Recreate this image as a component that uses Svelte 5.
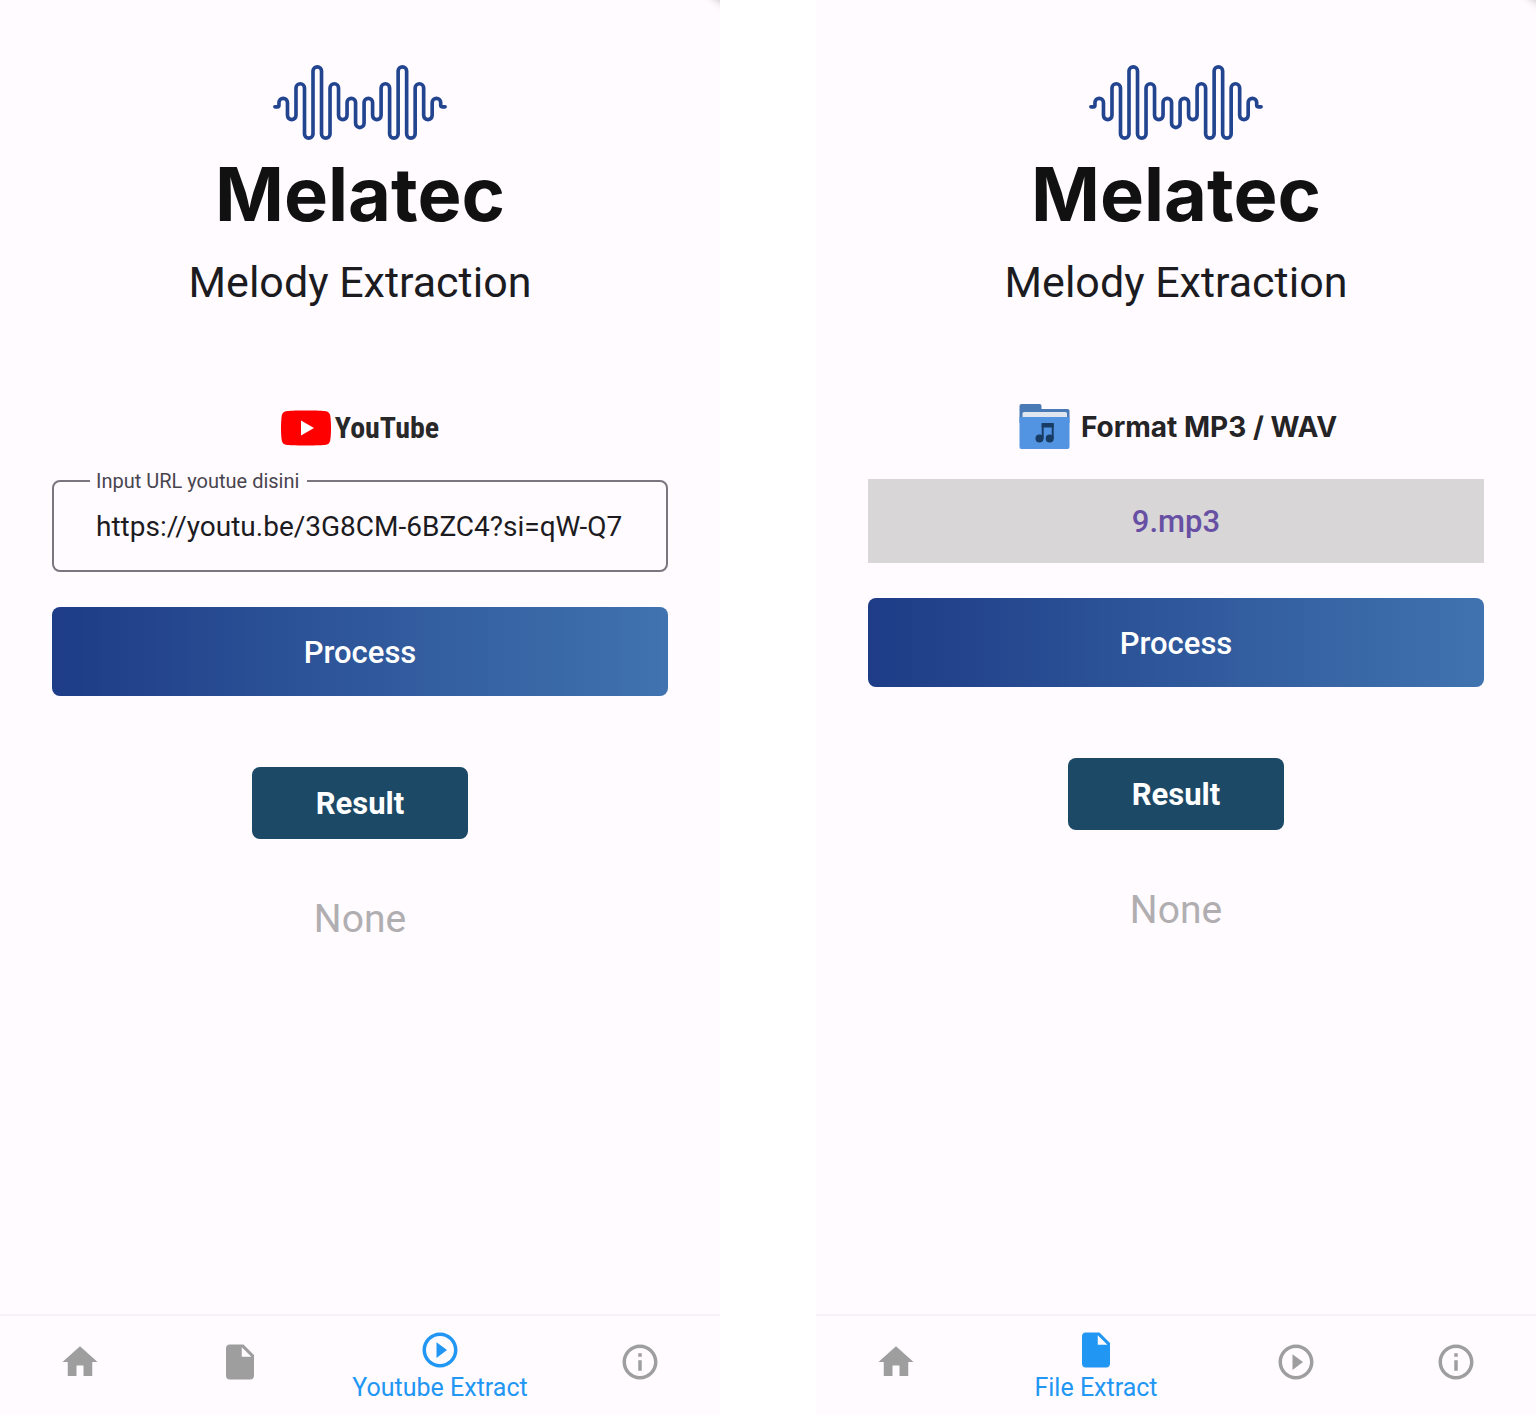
<script>
  const tops = [143.5, 99.5, 48.5, 99.5, 143.5, 143.5, 99.5, 48.5, 99.5, 143.5];
  const bottoms = [207.5, 263.5, 263.5, 207.5, 231.5, 207.5, 263.5, 263.5, 207.5];
  const half = 25.65;
  const r = half / 2;

  // Continuous line of rounded crests and troughs.
  function wave() {
    let x = 296.3;
    let d = `M284 169H${x - 4}Q${x} 169 ${x} 164`;
    tops.forEach((top, i) => {
      d += `V${top + r}a${r} ${r} 0 0 1 ${half} 0`;
      x += half;
      if (i < bottoms.length) {
        d += `V${bottoms[i] - r}a${r} ${r} 0 0 0 ${half} 0`;
        x += half;
      }
    });
    return d + `V164Q${x} 169 ${x + 4} 169H797`;
  }

  const wavePath = wave();

  const icons = {
    home: 'M10 20v-6h4v6h5v-8h3L12 3 2 12h3v8z',
    file: 'M6 2C4.900 2 4 2.900 4 4v16c0 1.100.9 2 2 2h12c1.100 0 2-.9 2-2V8l-6-6H6zm7 7V3.500L18.500 9H13z',
    play: 'M10 16.500l6-4.500-6-4.500v9zM12 2C6.480 2 2 6.480 2 12s4.480 10 10 10 10-4.480 10-10S17.520 2 12 2zm0 18c-4.410 0-8-3.590-8-8s3.590-8 8-8 8 3.590 8 8-3.590 8-8 8z',
    info: 'M11 7h2v2h-2zm0 4h2v6h-2zm1-9C6.480 2 2 6.480 2 12s4.480 10 10 10 10-4.480 10-10S17.520 2 12 2zm0 18c-4.410 0-8-3.590-8-8s3.590-8 8-8 8 3.590 8 8-3.590 8-8 8z'
  };

  const labels = { home: 'Home', file: 'File Extract', play: 'Youtube Extract', info: 'Info' };
  const items = ['home', 'file', 'play', 'info'];

  let url = $state('https://youtu.be/3G8CM-6BZC4?si=qW-Q7');
</script>

{#snippet header()}
  <header>
    <svg class="wave" viewBox="279 43 523 226" aria-hidden="true">
      <path d={wavePath} fill="none" stroke="#234590" stroke-width="11" stroke-linecap="round" />
    </svg>
    <h1>Melatec</h1>
    <p class="subtitle">Melody Extraction</p>
  </header>
{/snippet}

{#snippet actions()}
  <button class="process" type="button">Process</button>
  <button class="result" type="button">Result</button>
  <p class="none">None</p>
{/snippet}

{#snippet nav(active)}
  <nav>
    {#each items as item}
      <a href="#{item}" class:active={item === active} aria-label={labels[item]}>
        <svg viewBox="0 0 24 24" aria-hidden="true"><path d={icons[item]} /></svg>
        {#if item === active}<span>{labels[item]}</span>{/if}
      </a>
    {/each}
  </nav>
{/snippet}

<main>
  <section class="screen">
    {@render header()}
    <div class="content">
      <div class="brand youtube">
        <svg class="tube" viewBox="0 0 50 36" aria-hidden="true">
          <path d="M25 .5C36 .5 42 .7 45 1.200 47.500 1.700 48.800 3.200 49.200 5.500c.6 3.500.8 8 .8 12.500s-.2 9-.8 12.500c-.4 2.300-1.700 3.800-4.200 4.300-3 .5-9 .7-20 .7s-17-.2-20-.7C2.500 34.300 1.200 32.800.8 30.500.2 27 0 22.500 0 18S.2 9 .8 5.500C1.200 3.200 2.500 1.700 5 1.200 8 .7 14 .5 25 .5z" fill="#f00" />
          <path d="M20 10.500v15L33 18z" fill="#fff" />
        </svg>
        <span>YouTube</span>
      </div>
      <fieldset>
        <legend><label for="url">Input URL youtue disini</label></legend>
        <input id="url" type="text" bind:value={url} />
      </fieldset>
      {@render actions()}
    </div>
    {@render nav('play')}
  </section>

  <section class="screen">
    {@render header()}
    <div class="content">
      <div class="brand">
        <svg class="folder" viewBox="0 0 50 46" aria-hidden="true">
          <path d="M0 2Q0 0 2 0h18q2 0 2 2v3h26q2 0 2 2v12H0z" fill="#4a7ab5" />
          <rect x="3" y="8" width="44.500" height="8" rx="1.500" fill="#dfe6f0" />
          <path d="M0 13h50v30q0 2-2 2H2q-2 0-2-2z" fill="#5294e2" />
          <path d="M23.200 34.500V20H33.200V34.500" fill="none" stroke="#183c63" stroke-width="2" />
          <path d="M22.200 19.500h12v4h-12z" fill="#183c63" />
          <circle cx="20" cy="34.500" r="4" fill="#183c63" />
          <circle cx="30.200" cy="34.500" r="4" fill="#183c63" />
        </svg>
        <span>Format MP3 / WAV</span>
      </div>
      <button class="picked" type="button">9.mp3</button>
      {@render actions()}
    </div>
    {@render nav('file')}
  </section>
</main>

<style>
  :global(body) {
    margin: 0;
    background: #fff;
  }

  main {
    display: grid;
    grid-template-columns: 1fr 1fr;
    column-gap: 96px;
    min-height: 100vh;
    font-family: Roboto, sans-serif;
    color: #1c1b1f;
  }

  .screen {
    position: relative;
    display: flex;
    flex-direction: column;
    min-width: 0;
    overflow: hidden;
    background: #fffbff;
  }

  /* Edge of the ribbon's shadow in the corner */
  .screen::before {
    content: '';
    position: absolute;
    top: -24px;
    right: -22px;
    width: 40px;
    height: 24px;
    background: #8c8488;
    filter: blur(4px);
    transform: rotate(35deg);
    opacity: 0.500;
  }

  header {
    display: flex;
    flex-direction: column;
    align-items: center;
    padding-top: 65px;
  }

  .wave {
    width: 174px;
    height: 75px;
  }

  h1 {
    margin: 9px 0 18px;
    font: 700 74px/90px Inter, sans-serif;
    color: #111;
  }

  p {
    margin: 0;
  }

  .subtitle {
    font-size: 43px;
    line-height: 50px;
  }

  .content {
    flex: 1;
    display: flex;
    flex-direction: column;
    padding: 95px 52px 0;
  }

  .brand {
    display: flex;
    align-items: center;
    justify-content: center;
    gap: 11px;
    height: 50px;
    padding-left: 4px;
    font: 700 28px/50px Inter, sans-serif;
    color: #242326;
  }

  .youtube {
    gap: 4px;
    padding: 2px 0 0;
    height: 48px;
    font: 700 30px/48px 'Roboto Condensed', Roboto, sans-serif;
    color: #282828;
  }

  .tube {
    width: 50px;
    height: 36px;
  }

  .folder {
    width: 51px;
    height: 46px;
  }

  fieldset {
    box-sizing: border-box;
    min-width: 0;
    height: 101px;
    margin: 19px 0 0;
    padding: 0 42px 0 36px;
    border: 2px solid #7a757f;
    border-radius: 8px;
  }

  legend {
    padding: 0 8px 0 6px;
    font-size: 20px;
    line-height: 20px;
    color: #49454f;
  }

  input {
    box-sizing: border-box;
    display: block;
    width: 100%;
    height: 70px;
    margin: 0;
    padding: 0 0 0 6px;
    border: 0;
    outline: 0;
    background: transparent;
    font: 400 28px/32px Roboto, sans-serif;
    color: #1c1b1f;
  }

  button {
    padding: 2px 0 0;
    border: 0;
    border-radius: 8px;
    font: 500 31px/36px Roboto, sans-serif;
    color: #fff;
  }

  .picked {
    height: 84px;
    margin-top: 27px;
    border-radius: 0;
    background: #d8d6d7;
    color: #6750a4;
  }

  .process {
    height: 89px;
    margin-top: 35px;
    background: linear-gradient(90deg, #1e3c87, #4073af);
  }

  .result {
    align-self: center;
    width: 216px;
    height: 72px;
    margin-top: 71px;
    background: #1c4966;
    font-weight: 700;
  }

  .none {
    margin-top: 56px;
    font-size: 39px;
    line-height: 48px;
    text-align: center;
    color: #b0aeb1;
  }

  nav {
    display: flex;
    box-sizing: border-box;
    height: 101px;
    border-top: 2px solid #f6f1f6;
  }

  nav a {
    flex: 1;
    display: flex;
    flex-direction: column;
    align-items: center;
    justify-content: center;
    padding-bottom: 8px;
    color: #9e9e9e;
    text-decoration: none;
    font-size: 25px;
    line-height: 34px;
  }

  nav a.active {
    flex: 1.500;
    padding: 2px 0 0;
    color: #2196f3;
  }

  nav svg {
    width: 42px;
    height: 42px;
    fill: currentColor;
  }
</style>
